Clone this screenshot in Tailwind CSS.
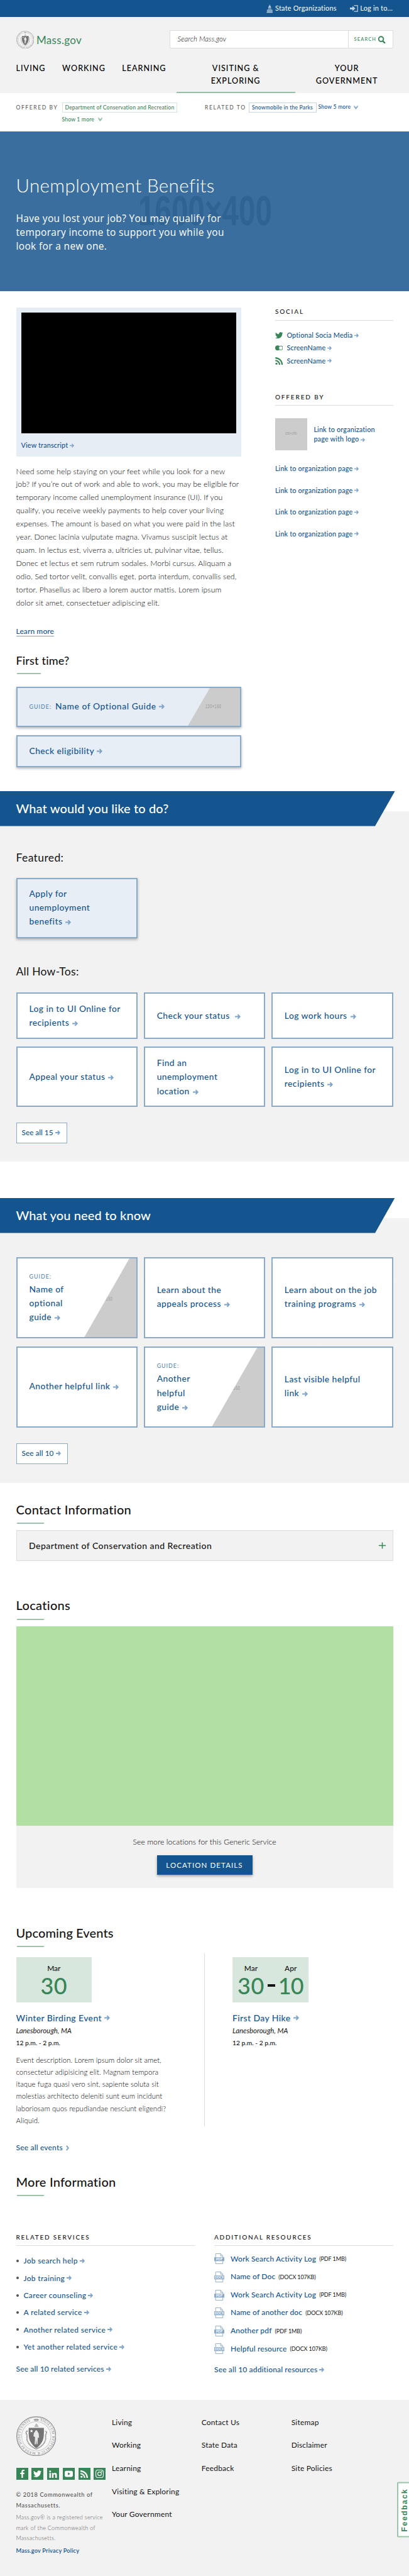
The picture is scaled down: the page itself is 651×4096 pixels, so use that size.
<!DOCTYPE html>
<html lang="en">
<head>
<meta charset="utf-8">
<title>Unemployment Benefits | Mass.gov</title>
<script src="https://cdn.jsdelivr.net/npm/@tailwindcss/browser@4"></script>
</head>
<body class="w-[651px] overflow-x-hidden bg-white text-[#141414] font-['Lato','Open_Sans',sans-serif] whitespace-nowrap">

<svg class="hidden">
  <symbol id="arrow" viewBox="0 0 10 10"><path d="M0 5h7M5 1.2 8.6 5 5 8.8" fill="none" stroke="currentColor" stroke-width="2.2"/></symbol>
  <symbol id="down" viewBox="0 0 10 10"><path d="M1.5 1.5 5 5.2l3.5-3.7v3L5 8.8 1.5 4.500z" fill="currentColor"/></symbol>
  <symbol id="right" viewBox="0 0 6 10"><path d="M1.2 1 4.300 5 1.200 9" fill="none" stroke="currentColor" stroke-width="2.2"/></symbol>
  <symbol id="twitter" viewBox="0 0 24 24"><path fill="currentColor" d="M23.954 4.569a10 10 0 0 1-2.825.775 4.958 4.958 0 0 0 2.163-2.723c-.951.555-2.005.959-3.127 1.184a4.920 4.920 0 0 0-8.384 4.482C7.691 8.094 4.066 6.130 1.640 3.161a4.822 4.822 0 0 0-.666 2.475c0 1.710.870 3.213 2.188 4.096a4.904 4.904 0 0 1-2.228-.616v.061a4.923 4.923 0 0 0 3.946 4.827 4.996 4.996 0 0 1-2.212.085 4.937 4.937 0 0 0 4.604 3.417 9.868 9.868 0 0 1-6.102 2.105c-.390 0-.779-.023-1.170-.067a13.995 13.995 0 0 0 7.557 2.209c9.054 0 13.999-7.496 13.999-13.986 0-.209 0-.420-.015-.630a9.936 9.936 0 0 0 2.460-2.548z"/></symbol>
  <symbol id="rss" viewBox="0 0 24 24"><circle cx="3.500" cy="20.500" r="3.200" fill="currentColor"/><path d="M0 10.500A13.500 13.500 0 0 1 13.500 24M0 2.300A21.700 21.700 0 0 1 21.700 24" fill="none" stroke="currentColor" stroke-width="4.400"/></symbol>
  <symbol id="flickr" viewBox="0 0 24 24"><circle cx="7.500" cy="12" r="7.500" fill="currentColor"/><circle cx="17" cy="12" r="6.200" fill="#fff" stroke="currentColor" stroke-width="1.800"/></symbol>
  <symbol id="seal" viewBox="0 0 100 100">
    <circle cx="50" cy="50" r="49" fill="#f7f7f7" stroke="#777" stroke-width="1.600"/>
    <circle cx="50" cy="50" r="46.500" fill="none" stroke="#999" stroke-width=".6"/>
    <circle cx="50" cy="50" r="36.500" fill="none" stroke="#aaa" stroke-width="1.600" stroke-dasharray="1 .6"/>
    <path id="ring" d="M59.500 11.200A40 40 0 1 1 40.500 11.200" fill="none"/>
    <text font-size="9" fill="#777" font-family="Liberation Serif, serif" textLength="226"><textPath href="#ring">SIGILLUM REIPUBLICÆ MASSACHUSETTENSIS</textPath></text>
    <path d="M43 9h14M46 7.500h8v3.400h-8z" fill="none" stroke="#777" stroke-width="1.200"/>
    <path d="M31 29h38c.500 15 0 27-4 34-4 8-10 14-15 17-5-3-11-9-15-17-4-7-4.500-19-4-34z" fill="#747474"/>
    <path d="M45 27c1-4 3-7 5-9 3 2 5 5 6 9z" fill="#bbb"/>
    <path d="M28 37c-5 1-4 6-2 8 2 4-1 11 2 17 3 8 10 15 22 20 12-5 19-12 22-20 3-6 0-13 2-17 2-2 3-7-2-8" fill="none" stroke="#888" stroke-width="3" stroke-dasharray="2.500 1"/>
    <path d="M47 38a3 3 0 0 1 6 0l3 5 1 11-3-1-1 17h-2l-1-12-1 12h-3l1-18-4-2 1-8z" fill="#e8e8e8"/>
    <path d="m38 33 1.200 2.600 2.800.2-2.200 1.800.8 2.800-2.600-1.600-2.500 1.600.8-2.800-2.100-1.800 2.700-.2z" fill="#fff"/>
  </symbol>
  <symbol id="doc" viewBox="0 0 16 17"><path d="M2.200.5h8l3.500 3.700v12.300H2.200zM10.200.5v3.700h3.500" fill="#fff" stroke="#89aac9" stroke-width=".9"/><path d="M0 6.200h16v6.100H0z" fill="#89aac9"/></symbol>
</svg>

<!-- utility bar -->
<div class="flex h-[27px] items-center justify-end bg-[#14558f] pr-[26px] text-[10.900px] font-normal tracking-[0.230px] text-white">
  <svg class="mr-[4px] h-[20px] w-[10.500px] text-[#c2d3e3]" viewBox="0 0 10 20" fill="currentColor"><path d="M4.700 0h.6v2.200h-.6zM3.500 3.800C3.700 2.500 4.300 2 5 2s1.300.500 1.500 1.800zM2.800 7.200c0-2 .8-3 2.200-3s2.200 1 2.200 3zM2.600 8h4.800v1H2.600zM2.800 9.500h.8v2.700h-.8zM4.600 9.500h.8v2.700h-.8zM6.400 9.500h.8v2.700h-.8zM.5 12.600h9v1.200h-9zM.8 14.300h1.100v3.700H.8zM2.800 14.300h1.100v3.700H2.800zM4.500 14.300h1v3.700h-1zM6.200 14.300h1.100v3.700H6.200zM8.100 14.300h1.100v3.700H8.100zM0 18.200h10v1.400H0z" transform="translate(0 3.300) scale(1 .66)"/></svg>
  <span>State Organizations</span>
  <svg class="ml-[21.500px] mr-[3px] h-[11px] w-[13px] text-[#c2d3e3]" viewBox="0 0 13 11" fill="currentColor"><path d="M0 4h4V1.500l4.600 4L4 9.500V7H0z"/><path d="M6.500.8h5.700v9.400H6.500" fill="none" stroke="currentColor" stroke-width="1.200"/></svg>
  <span>Log in to...</span>
</div>

<!-- header -->
<header class="h-[121px] bg-[#f2f2f2] px-[25.500px] pt-[21.300px]">
  <div class="flex h-[29.200px] items-center justify-between">
    <div class="flex items-center">
      <svg class="h-[28.500px] w-[28.500px]"><use href="#seal"/></svg>
      <span class="ml-[4px] pt-[2px] text-[17px] font-normal leading-[20px] tracking-[0.300px] text-[#388557]">Mass.gov</span>
    </div>
    <div class="flex h-full w-[356px] border border-[#dcdcdc] bg-white">
      <div class="flex flex-1 items-center pl-[12px] text-[11.300px] font-light italic tracking-[0.100px] text-black">Search Mass.gov</div>
      <div class="flex w-[71px] items-center border-l border-[#dcdcdc] pl-[9px] text-[7.400px] font-medium tracking-[1.200px] text-[#388557]">SEARCH
        <svg class="ml-[2px] h-[12.500px] w-[13px]" viewBox="0 0 13 13" fill="none" stroke="currentColor"><circle cx="5.500" cy="5.300" r="4" stroke-width="2"/><path d="m8.300 8.500 3.800 3.800" stroke-width="2.400"/></svg>
      </div>
    </div>
  </div>
  <nav class="mt-[22px] flex h-[48.500px] text-[12.600px] font-medium leading-[19.700px] tracking-[1px] text-black">
    <div class="w-[73.600px]">LIVING</div>
    <div class="w-[95.100px]">WORKING</div>
    <div class="w-[86.500px]">LEARNING</div>
    <div class="flex w-[189px] flex-col justify-between text-center"><span>VISITING &amp;<br>EXPLORING</span><i class="block h-[2px] -skew-x-[20deg] bg-[#93bfa4]"></i></div>
    <div class="flex-1 pl-[9px] text-center">YOUR<br>GOVERNMENT</div>
  </nav>
</header>

<!-- relationship strip -->
<div class="flex h-[61px] px-[25.500px] pt-[14.500px] text-[8.600px] font-medium tracking-[0.170px]">
  <div class="w-[73px] text-[8.500px] font-normal leading-[16px] tracking-[1.600px] text-[#535353]">OFFERED BY</div>
  <div class="w-[227.500px] text-[#388557]">
    <div class="h-[16px] w-[183px] border border-[#d4e5db] pl-[4px] leading-[14px]">Department of Conservation and Recreation</div>
    <div class="mt-[3px] flex items-center leading-[16px]">Show 1 more<svg class="ml-[5px] h-[9px] w-[9px] text-[#93bfa4]"><use href="#down"/></svg></div>
  </div>
  <div class="w-[70px] text-[8.500px] font-normal leading-[16px] tracking-[1.600px] text-[#535353]">RELATED TO</div>
  <div class="flex h-[16px] text-[#14558f]">
    <div class="w-[107.600px] border border-[#c8d7e6] pl-[4px] leading-[14px]">Snowmobile in the Parks</div>
    <div class="ml-[3px] flex items-center">Show 5 more<svg class="ml-[4px] h-[9px] w-[9px] text-[#89aac9]"><use href="#down"/></svg></div>
  </div>
</div>

<!-- hero -->
<section class="relative h-[254px] bg-[#3a6e9e] pl-[25.500px] pt-[67px] text-white">
  <div class="absolute left-[220px] top-[88px] origin-left scale-x-[0.710] text-[67px] font-bold leading-[76px] text-[#2f6394] font-['Liberation_Sans']">1600×400</div>
  <h1 class="relative text-[29.500px] font-light leading-[38px] tracking-[0.400px]">Unemployment Benefits</h1>
  <p class="relative mt-[21.500px] text-[15.500px] font-normal leading-[22.300px] tracking-[0.350px] font-['Open_Sans']">Have you lost your job? You may qualify for<br>temporary income to support you while you<br>look for a new one.</p>
</section>

<!-- overview + sidebar -->
<section class="flex h-[795px] px-[25.500px] pt-[25.500px]">
  <div class="w-[358.500px]">
    <div class="h-[237px] bg-[#e7edf5] px-[8px] pt-[8.500px]">
      <div class="h-[192px] bg-black"></div>
      <div class="mt-[12px] flex items-center text-[10.800px] font-medium leading-[14px] tracking-[0.170px] text-[#14558f]">View transcript<svg class="ml-[3px] h-[7px] w-[7px] text-[#7fa3c8]"><use href="#arrow"/></svg></div>
    </div>
    <p class="mt-[14px] text-[12.300px] font-light leading-[20.970px] tracking-[0.080px] text-black">Need some help staying on your feet while you look for a new<br>job? If you’re out of work and able to work, you may be eligible for<br>temporary income called unemployment insurance (UI). If you<br>qualify, you receive weekly payments to help cover your living<br>expenses. The amount is based on what you were paid in the last<br>year. Donec lacinia vulputate magna. Vivamus suscipit lectus at<br>quam. In lectus est, viverra a, ultricies ut, pulvinar vitae, tellus.<br>Donec et lectus et sem rutrum sodales. Morbi cursus. Aliquam a<br>odio. Sed tortor velit, convallis eget, porta interdum, convallis sed,<br>tortor. Phasellus ac libero a lorem auctor mattis. Lorem ipsum<br>dolor sit amet, consectetuer adipiscing elit.</p>
    <div class="mt-[19.500px] h-[17px]"><a class="inline-block h-[17px] border-b border-[#7fa3c8] text-[12px] font-medium leading-[17px] tracking-[0.100px] text-[#14558f]">Learn more</a></div>
    <h2 class="mt-[31px] text-[18px] font-medium leading-[24px] tracking-[0.170px]">First time?</h2>
    <div class="ml-[1px] mt-[8px] h-[2px] w-[38px] -skew-x-[20deg] bg-[#9bc4ab]"></div>
    <div class="relative mt-[20px] flex h-[64.200px] items-center border-2 border-[#89aac9] bg-[#e6edf4] pl-[19px] text-[13.800px] font-medium tracking-[0.600px] text-[#14558f] shadow-[0_2px_4px_rgba(0,0,0,0.300)]">
      <svg class="absolute right-0 top-0 h-full w-[83px]" viewBox="0 0 83 60" preserveAspectRatio="none"><path d="M35 0H83V60H0z" fill="#ccc"/></svg>
      <span class="absolute left-[299px] origin-left scale-x-[0.600] text-[9px] font-normal tracking-[1px] text-[#999] font-['Liberation_Sans']">130×160</span>
      <span class="mr-[6px] text-[8.800px] font-normal tracking-[1.030px] text-[#4a7bab]">GUIDE:</span>Name of Optional Guide<svg class="ml-[4px] h-[9px] w-[9px] text-[#7fa3c8]"><use href="#arrow"/></svg>
    </div>
    <div class="mt-[12.800px] flex h-[51.300px] items-center border-2 border-[#89aac9] bg-[#e8eef5] pl-[19px] text-[13.800px] font-medium tracking-[0.450px] text-[#14558f] shadow-[0_2px_4px_rgba(0,0,0,0.300)]">Check eligibility<svg class="ml-[4px] h-[9px] w-[9px] text-[#7fa3c8]"><use href="#arrow"/></svg></div>
  </div>

  <aside class="-mt-[0.500px] ml-[54px] w-[187.700px] text-[10.800px] font-medium leading-[14px] tracking-[0.170px] text-[#14558f]">
    <h3 class="border-b-[1.500px] border-[#dcdcdc] pb-[7px] text-[10px] leading-[14px] tracking-[1.870px] text-[#141414]">SOCIAL</h3>
    <div class="mt-[16px] flex h-[14px] items-center"><svg class="mr-[6px] h-[12.500px] w-[12.500px] text-[#388557]"><use href="#twitter"/></svg>Optional Socia Media<svg class="ml-[3px] h-[7px] w-[7px] text-[#7fa3c8]"><use href="#arrow"/></svg></div>
    <div class="mt-[6.300px] flex h-[14px] items-center"><svg class="mr-[6px] h-[12.500px] w-[12.500px] text-[#388557]"><use href="#flickr"/></svg>ScreenName<svg class="ml-[3px] h-[7px] w-[7px] text-[#7fa3c8]"><use href="#arrow"/></svg></div>
    <div class="mt-[6.300px] flex h-[14px] items-center"><svg class="mr-[6px] h-[12px] w-[12.500px] text-[#388557]"><use href="#rss"/></svg>ScreenName<svg class="ml-[3px] h-[7px] w-[7px] text-[#7fa3c8]"><use href="#arrow"/></svg></div>
    <h3 class="mt-[43.600px] border-b-[1.500px] border-[#dcdcdc] pb-[6px] text-[10px] leading-[14px] tracking-[1.870px] text-[#141414]">OFFERED BY</h3>
    <div class="mt-[19.500px] flex h-[51px] items-center">
      <div class="mr-[10.500px] flex h-[51px] w-[51px] items-center justify-center bg-[#ccc] text-[4.500px] font-normal text-[#999] font-['Liberation_Sans']">250×250</div>
      <div class="leading-[15.200px]">Link to organization<br>page with logo<svg class="ml-[3px] inline h-[7px] w-[7px] text-[#7fa3c8]"><use href="#arrow"/></svg></div>
    </div>
    <div class="mt-[22.700px] flex h-[14px] items-center">Link to organization page<svg class="ml-[3px] h-[7px] w-[7px] text-[#7fa3c8]"><use href="#arrow"/></svg></div>
    <div class="mt-[20.400px] flex h-[14px] items-center">Link to organization page<svg class="ml-[3px] h-[7px] w-[7px] text-[#7fa3c8]"><use href="#arrow"/></svg></div>
    <div class="mt-[20.400px] flex h-[14px] items-center">Link to organization page<svg class="ml-[3px] h-[7px] w-[7px] text-[#7fa3c8]"><use href="#arrow"/></svg></div>
    <div class="mt-[20.400px] flex h-[14px] items-center">Link to organization page<svg class="ml-[3px] h-[7px] w-[7px] text-[#7fa3c8]"><use href="#arrow"/></svg></div>
  </aside>
</section>

<!-- what would you like to do -->
<section class="h-[589.400px] bg-linear-to-b from-white from-[32px] to-[#f2f2f2] to-[32px]">
  <h2 class="flex h-[55.500px] w-[628.600px] items-center bg-[#14558f] pb-[1px] pl-[25.500px] text-[20px] font-medium tracking-[0.120px] text-white [clip-path:polygon(0_0,100%_0,597px_100%,0_100%)]">What would you like to do?</h2>
  <div class="px-[25.500px] text-[13.800px] font-medium leading-[22.200px] tracking-[0.450px] text-[#14558f]">
    <h3 class="mt-[38.500px] text-[17.500px] font-normal leading-[24px] tracking-[0.380px] text-[#141414]">Featured:</h3>
    <div class="mt-[20.400px] flex h-[96px] w-[193.700px] items-center border-2 border-[#89aac9] bg-[#e8eef5] pb-[3px] pl-[19px] shadow-[0_2px_4px_rgba(0,0,0,0.300)]"><span>Apply for<br>unemployment<br>benefits<svg class="ml-[5px] inline h-[9px] w-[9px] text-[#7fa3c8]"><use href="#arrow"/></svg></span></div>
    <h3 class="mt-[41px] text-[17.500px] font-normal leading-[24px] tracking-[0.280px] text-[#141414]">All How-Tos:</h3>
    <div class="mt-[20.600px] grid grid-cols-3 grid-rows-[73.800px_96px] gap-x-[9.500px] gap-y-[12.700px]">
      <div class="flex items-center border-2 border-[#89aac9] bg-white pl-[19px]"><span>Log in to UI Online for<br>recipients<svg class="ml-[5px] inline h-[9px] w-[9px] text-[#7fa3c8]"><use href="#arrow"/></svg></span></div>
      <div class="flex items-center border-2 border-[#89aac9] bg-white pl-[19px]"><span>Check your status<svg class="ml-[8px] inline h-[9px] w-[9px] text-[#7fa3c8]"><use href="#arrow"/></svg></span></div>
      <div class="flex items-center border-2 border-[#89aac9] bg-white pl-[19px]"><span>Log work hours<svg class="ml-[5px] inline h-[9px] w-[9px] text-[#7fa3c8]"><use href="#arrow"/></svg></span></div>
      <div class="flex items-center border-2 border-[#89aac9] bg-white pl-[19px]"><span>Appeal your status<svg class="ml-[5px] inline h-[9px] w-[9px] text-[#7fa3c8]"><use href="#arrow"/></svg></span></div>
      <div class="flex items-center border-2 border-[#89aac9] bg-white pl-[19px]"><span>Find an<br>unemployment<br>location<svg class="ml-[5px] inline h-[9px] w-[9px] text-[#7fa3c8]"><use href="#arrow"/></svg></span></div>
      <div class="flex items-center border-2 border-[#89aac9] bg-white pl-[19px]"><span>Log in to UI Online for<br>recipients<svg class="ml-[5px] inline h-[9px] w-[9px] text-[#7fa3c8]"><use href="#arrow"/></svg></span></div>
    </div>
    <div class="mt-[24.700px] flex h-[32.500px] w-[81px] items-center border border-[#89aac9] bg-white pl-[8px] text-[11.800px] tracking-normal">See all 15<svg class="ml-[3px] h-[8px] w-[8px] text-[#7fa3c8]"><use href="#arrow"/></svg></div>
  </div>
</section>

<!-- what you need to know -->
<section class="mt-[57.200px] h-[453px] bg-linear-to-b from-white from-[32px] to-[#f2f2f2] to-[32px]">
  <h2 class="flex h-[56px] w-[628.600px] items-center bg-[#14558f] pb-[1px] pl-[25.500px] text-[20px] font-medium tracking-[0.120px] text-white [clip-path:polygon(0_0,100%_0,597px_100%,0_100%)]">What you need to know</h2>
  <div class="px-[25.500px] pt-[38px] text-[13.800px] font-medium leading-[22.200px] tracking-[0.450px] text-[#14558f]">
    <div class="grid grid-cols-3 grid-rows-[129.600px_129.600px] gap-x-[9.500px] gap-y-[12.700px]">
      <div class="relative flex items-center overflow-hidden border-2 border-[#89aac9] bg-white pb-[1px] pl-[19px]">
        <div class="absolute right-0 top-0 h-full w-[83px] bg-[#ccc] [clip-path:polygon(72px_0,100%_0,100%_100%,0_100%)]"><span class="absolute left-[20px] top-[53px] block origin-left scale-x-[0.600] text-[9px] font-normal leading-[22px] tracking-[1px] text-[#999] font-['Liberation_Sans']">130×160</span></div>
        <span class="relative"><span class="block text-[8.800px] font-normal leading-[19px] tracking-[1.030px] text-[#4a7bab]">GUIDE:</span>Name of<br>optional<br>guide<svg class="ml-[5px] inline h-[9px] w-[9px] text-[#7fa3c8]"><use href="#arrow"/></svg></span>
      </div>
      <div class="flex items-center border-2 border-[#89aac9] bg-white pb-[3px] pl-[19px]"><span>Learn about the<br>appeals process<svg class="ml-[5px] inline h-[9px] w-[9px] text-[#7fa3c8]"><use href="#arrow"/></svg></span></div>
      <div class="flex items-center border-2 border-[#89aac9] bg-white pb-[3px] pl-[19px]"><span>Learn about on the job<br>training programs<svg class="ml-[5px] inline h-[9px] w-[9px] text-[#7fa3c8]"><use href="#arrow"/></svg></span></div>
      <div class="flex items-center border-2 border-[#89aac9] bg-white pb-[3px] pl-[19px]"><span>Another helpful link<svg class="ml-[5px] inline h-[9px] w-[9px] text-[#7fa3c8]"><use href="#arrow"/></svg></span></div>
      <div class="relative flex items-center overflow-hidden border-2 border-[#89aac9] bg-white pb-[1px] pl-[19px]">
        <div class="absolute right-0 top-0 h-full w-[83px] bg-[#ccc] [clip-path:polygon(72px_0,100%_0,100%_100%,0_100%)]"><span class="absolute left-[20px] top-[53px] block origin-left scale-x-[0.600] text-[9px] font-normal leading-[22px] tracking-[1px] text-[#999] font-['Liberation_Sans']">130×160</span></div>
        <span class="relative"><span class="block text-[8.800px] font-normal leading-[19px] tracking-[1.030px] text-[#4a7bab]">GUIDE:</span>Another<br>helpful<br>guide<svg class="ml-[5px] inline h-[9px] w-[9px] text-[#7fa3c8]"><use href="#arrow"/></svg></span>
      </div>
      <div class="flex items-center border-2 border-[#89aac9] bg-white pb-[3px] pl-[19px]"><span>Last visible helpful<br>link<svg class="ml-[5px] inline h-[9px] w-[9px] text-[#7fa3c8]"><use href="#arrow"/></svg></span></div>
    </div>
    <div class="mt-[24.700px] flex h-[32.500px] w-[82.500px] items-center border border-[#89aac9] bg-white pl-[8px] text-[11.800px] tracking-[0.100px]">See all 10<svg class="ml-[3px] h-[8px] w-[8px] text-[#7fa3c8]"><use href="#arrow"/></svg></div>
  </div>
</section>

<main class="h-[1458.600px] px-[25.500px]">
  <!-- contact -->
  <h2 class="pt-[29px] text-[20px] font-medium leading-[26px] tracking-[0.310px]">Contact Information</h2>
  <div class="ml-[1.500px] mt-[8.500px] h-[2px] w-[43px] -skew-x-[20deg] bg-[#9bc4ab]"></div>
  <div class="mt-[10px] flex h-[49px] items-center justify-between border-[1.500px] border-[#dcdcdc] bg-[#f2f2f2] pl-[19.500px] pr-[11px] text-[14px] font-medium tracking-[0.470px]">Department of Conservation and Recreation
    <svg class="h-[11px] w-[11px]" viewBox="0 0 11 11" stroke="#388557" stroke-width="1.500"><path d="M0 5.500h11M5.500.500v10"/></svg>
  </div>

  <!-- locations -->
  <h2 class="mt-[57.300px] text-[20px] font-medium leading-[26px] tracking-[0.310px]">Locations</h2>
  <div class="ml-[1.500px] mt-[8.500px] h-[2px] w-[43px] -skew-x-[20deg] bg-[#9bc4ab]"></div>
  <div class="mt-[10px] h-[317.600px] bg-[#b2dfa2]"></div>
  <div class="flex h-[98.500px] flex-col items-center bg-[#f2f2f2] pt-[16px]">
    <p class="text-[12.200px] font-light leading-[20px] tracking-[0.070px] text-black">See more locations for this Generic Service</p>
    <div class="mt-[10.300px] flex h-[31.700px] w-[152px] items-center justify-center bg-[#14558f] text-[11.500px] font-normal tracking-[1.100px] text-white shadow-[0_2px_4px_rgba(0,0,0,0.350)]">LOCATION DETAILS</div>
  </div>

  <!-- events -->
  <h2 class="mt-[57.800px] text-[20px] font-medium leading-[26px] tracking-[0.120px]">Upcoming Events</h2>
  <div class="ml-[1.500px] mt-[8.500px] h-[2px] w-[43px] -skew-x-[20deg] bg-[#9bc4ab]"></div>
  <div class="mt-[10px] flex h-[274.400px] pt-[6px]">
    <div class="w-[344.500px]">
      <div class="flex h-[72px] w-[120.600px] flex-col items-center bg-[#d8e7dd] pt-[10px] font-medium"><span class="text-[11.900px] leading-[16px]">Mar</span><span class="text-[36px] leading-[38px] tracking-[0.500px] text-[#388557]">30</span></div>
      <h3 class="mt-[16px] flex h-[16px] items-center text-[14px] font-medium tracking-[0.390px] text-[#14558f]">Winter Birding Event<svg class="ml-[4px] h-[9px] w-[9px] text-[#7fa3c8]"><use href="#arrow"/></svg></h3>
      <div class="mt-[5px] text-[11.400px] font-normal italic leading-[15px]">Lanesborough, MA</div>
      <div class="mt-[5px] text-[10.300px] font-medium leading-[15px]">12 p.m. - 2 p.m.</div>
      <p class="mt-[10px] text-[11.400px] font-light leading-[19.060px] tracking-[0.110px] text-black">Event description. Lorem ipsum dolor sit amet,<br>consectetur adipisicing elit. Magnam tempora<br>itaque fuga quasi vero sint, sapiente soluta sit<br>molestias architecto deleniti sunt eum incidunt<br>laboriosam quos repudiandae nesciunt eligendi?<br>Aliquid.</p>
    </div>
    <div class="-ml-[45px] -mt-[6px] w-px bg-[#dcdcdc]"></div>
    <div class="ml-[44px]">
      <div class="flex h-[72px] w-[120.600px] items-start justify-center bg-[#d8e7dd] pt-[10px] font-medium">
        <span class="flex flex-col items-center"><span class="text-[11.900px] leading-[16px]">Mar</span><span class="text-[36px] leading-[38px] tracking-[0.500px] text-[#388557]">30</span></span>
        <i class="mx-[5px] mt-[33px] block h-[4px] w-[12px] bg-[#141414]"></i>
        <span class="flex flex-col items-center"><span class="text-[11.900px] leading-[16px]">Apr</span><span class="text-[36px] leading-[38px] -tracking-[1px] text-[#388557]">10</span></span>
      </div>
      <h3 class="mt-[16px] flex h-[16px] items-center text-[14px] font-medium tracking-[0.390px] text-[#14558f]">First Day Hike<svg class="ml-[4px] h-[9px] w-[9px] text-[#7fa3c8]"><use href="#arrow"/></svg></h3>
      <div class="mt-[5px] text-[11.400px] font-normal italic leading-[15px]">Lanesborough, MA</div>
      <div class="mt-[5px] text-[10.300px] font-medium leading-[15px]">12 p.m. - 2 p.m.</div>
    </div>
  </div>
  <div class="mt-[26.500px] flex h-[16px] items-center text-[12px] font-medium tracking-[0.180px] text-[#14558f]">See all events<svg class="ml-[4px] h-[9px] w-[7px] text-[#7fa3c8]"><use href="#right"/></svg></div>

  <!-- more information -->
  <h2 class="mt-[32.500px] text-[20px] font-medium leading-[26px] tracking-[0.220px]">More Information</h2>
  <div class="ml-[1.500px] mt-[8.500px] h-[2px] w-[43px] -skew-x-[20deg] bg-[#9bc4ab]"></div>
  <div class="mt-[57.500px] flex gap-[31px] text-[12px] font-medium text-[#14558f]">
    <div class="w-[284.700px] tracking-[0.330px]">
      <h3 class="border-b-[1.500px] border-[#dcdcdc] pb-[6.500px] text-[10px] leading-[14px] tracking-[1.750px] text-[#141414]">RELATED SERVICES</h3>
      <ul class="mt-[10.300px] leading-[27.300px]">
        <li class="flex items-center"><i class="mr-[8px] h-[4px] w-[4px] rounded-full bg-[#535353]"></i>Job search help<svg class="ml-[3px] h-[8px] w-[8px] text-[#7fa3c8]"><use href="#arrow"/></svg></li>
        <li class="flex items-center"><i class="mr-[8px] h-[4px] w-[4px] rounded-full bg-[#535353]"></i>Job training<svg class="ml-[3px] h-[8px] w-[8px] text-[#7fa3c8]"><use href="#arrow"/></svg></li>
        <li class="flex items-center"><i class="mr-[8px] h-[4px] w-[4px] rounded-full bg-[#535353]"></i>Career counseling<svg class="ml-[3px] h-[8px] w-[8px] text-[#7fa3c8]"><use href="#arrow"/></svg></li>
        <li class="flex items-center"><i class="mr-[8px] h-[4px] w-[4px] rounded-full bg-[#535353]"></i>A related service<svg class="ml-[3px] h-[8px] w-[8px] text-[#7fa3c8]"><use href="#arrow"/></svg></li>
        <li class="flex items-center"><i class="mr-[8px] h-[4px] w-[4px] rounded-full bg-[#535353]"></i>Another related service<svg class="ml-[3px] h-[8px] w-[8px] text-[#7fa3c8]"><use href="#arrow"/></svg></li>
        <li class="flex items-center"><i class="mr-[8px] h-[4px] w-[4px] rounded-full bg-[#535353]"></i>Yet another related service<svg class="ml-[3px] h-[8px] w-[8px] text-[#7fa3c8]"><use href="#arrow"/></svg></li>
      </ul>
      <div class="mt-[14px] flex h-[16px] items-center tracking-[0.150px]">See all 10 related services<svg class="ml-[3px] h-[8px] w-[8px] text-[#7fa3c8]"><use href="#arrow"/></svg></div>
    </div>
    <div class="w-[284.700px] tracking-[0.150px]">
      <h3 class="border-b-[1.500px] border-[#dcdcdc] pb-[6.500px] text-[10px] leading-[14px] tracking-[1.750px] text-[#141414]">ADDITIONAL RESOURCES</h3>
      <ul class="mt-[6.500px] leading-[28.600px]">
        <li class="flex h-[28.600px] items-center"><span class="relative mr-[10px] block h-[17px] w-[16px]"><svg class="h-full w-full"><use href="#doc"/></svg><b class="absolute inset-x-0 top-[6px] text-center text-[5.500px] leading-[7px] tracking-normal text-white">PDF</b></span>Work Search Activity Log<span class="ml-[5px] pt-[1px] text-[9px] font-normal -tracking-[0.100px] text-[#141414]">(PDF 1MB)</span></li>
        <li class="flex h-[28.600px] items-center"><span class="relative mr-[10px] block h-[17px] w-[16px]"><svg class="h-full w-full"><use href="#doc"/></svg><b class="absolute inset-x-0 top-[6px] text-center text-[5px] leading-[7px] tracking-normal text-white">DOCX</b></span>Name of Doc<span class="ml-[5px] pt-[1px] text-[9px] font-normal -tracking-[0.100px] text-[#141414]">(DOCX 107KB)</span></li>
        <li class="flex h-[28.600px] items-center"><span class="relative mr-[10px] block h-[17px] w-[16px]"><svg class="h-full w-full"><use href="#doc"/></svg><b class="absolute inset-x-0 top-[6px] text-center text-[5.500px] leading-[7px] tracking-normal text-white">PDF</b></span>Work Search Activity Log<span class="ml-[5px] pt-[1px] text-[9px] font-normal -tracking-[0.100px] text-[#141414]">(PDF 1MB)</span></li>
        <li class="flex h-[28.600px] items-center"><span class="relative mr-[10px] block h-[17px] w-[16px]"><svg class="h-full w-full"><use href="#doc"/></svg><b class="absolute inset-x-0 top-[6px] text-center text-[5px] leading-[7px] tracking-normal text-white">DOCX</b></span>Name of another doc<span class="ml-[5px] pt-[1px] text-[9px] font-normal -tracking-[0.100px] text-[#141414]">(DOCX 107KB)</span></li>
        <li class="flex h-[28.600px] items-center"><span class="relative mr-[10px] block h-[17px] w-[16px]"><svg class="h-full w-full"><use href="#doc"/></svg><b class="absolute inset-x-0 top-[6px] text-center text-[5.500px] leading-[7px] tracking-normal text-white">PDF</b></span>Another pdf<span class="ml-[5px] pt-[1px] text-[9px] font-normal -tracking-[0.100px] text-[#141414]">(PDF 1MB)</span></li>
        <li class="flex h-[28.600px] items-center"><span class="relative mr-[10px] block h-[17px] w-[16px]"><svg class="h-full w-full"><use href="#doc"/></svg><b class="absolute inset-x-0 top-[6px] text-center text-[5px] leading-[7px] tracking-normal text-white">DOCX</b></span>Helpful resource<span class="ml-[5px] pt-[1px] text-[9px] font-normal -tracking-[0.100px] text-[#141414]">(DOCX 107KB)</span></li>
      </ul>
      <div class="mt-[11px] flex h-[16px] items-center">See all 10 additional resources<svg class="ml-[3px] h-[8px] w-[8px] text-[#7fa3c8]"><use href="#arrow"/></svg></div>
    </div>
  </div>
</main>

<footer class="relative flex h-[279.800px] overflow-hidden bg-[#f2f2f2] pl-[25.500px] pt-[25.500px]">
  <div class="w-[152.500px]">
    <svg class="h-[63.500px] w-[63.500px]"><use href="#seal"/></svg>
    <div class="mt-[19.200px] flex gap-[5.800px] text-white">
      <span class="flex h-[19px] w-[19px] items-center justify-center bg-[#388557]"><svg class="h-[13px] w-[13px]" viewBox="0 0 24 24" fill="currentColor"><path d="M14 24V13h3.700l.6-4.300H14V6c0-1.200.4-2.100 2.200-2.100h2.300V.2C18 .1 16.700 0 15.100 0 11.800 0 9.600 2 9.600 5.600v3.100H6V13h3.600v11z"/></svg></span>
      <span class="flex h-[19px] w-[19px] items-center justify-center bg-[#388557]"><svg class="h-[13px] w-[13px]"><use href="#twitter"/></svg></span>
      <span class="flex h-[19px] w-[19px] items-center justify-center bg-[#388557]"><svg class="h-[12.500px] w-[12.500px]" viewBox="0 0 24 24" fill="currentColor"><circle cx="3.500" cy="3.500" r="2.800"/><path d="M1 8h5v15H1zM9 8h4.700v2.100c.7-1.200 2.300-2.500 4.700-2.500 4.900 0 5.600 3.200 5.600 7.400V23h-5v-7.100c0-1.800 0-4-2.400-4s-2.700 1.900-2.700 3.800V23H9z"/></svg></span>
      <span class="flex h-[19px] w-[19px] items-center justify-center bg-[#388557]"><svg class="h-[13px] w-[13px]" viewBox="0 0 24 24"><rect x="0" y="3" width="24" height="18" rx="5" fill="#fff"/><path d="m9.500 8 7 4-7 4z" fill="#388557"/></svg></span>
      <span class="flex h-[19px] w-[19px] items-center justify-center bg-[#388557]"><svg class="h-[12px] w-[12px]"><use href="#rss"/></svg></span>
      <span class="flex h-[19px] w-[19px] items-center justify-center bg-[#388557]"><svg class="h-[13px] w-[13px]" viewBox="0 0 24 24" fill="none" stroke="#fff" stroke-width="2"><rect x="1" y="1" width="22" height="22" rx="6"/><circle cx="12" cy="12" r="5.300"/><circle cx="18.300" cy="5.700" r=".7"/></svg></span>
    </div>
    <p class="mt-[16px] text-[9.200px] font-medium leading-[16.500px] tracking-[0.620px] text-[#535353]">© 2018 Commonwealth of<br>Massachusetts.</p>
    <p class="mt-[3px] text-[9px] font-light leading-[16.500px] tracking-[0.280px] text-[#606060]">Mass.gov® is a registered service<br>mark of the Commonwealth of<br>Massachusetts.</p>
    <p class="mt-[3.500px] text-[9.200px] font-semibold leading-[16.500px] tracking-[0.200px] text-[#14558f]">Mass.gov Privacy Policy</p>
  </div>
  <div class="-mt-[8px] w-[142.700px] text-[12px] font-normal leading-[36.700px] tracking-[0.200px]">Living<br>Working<br>Learning<br>Visiting &amp; Exploring<br>Your Government</div>
  <div class="-mt-[8px] w-[143px] text-[12px] font-normal leading-[36.700px] tracking-[0.200px]">Contact Us<br>State Data<br>Feedback</div>
  <div class="-mt-[8px] text-[12px] font-normal leading-[36.700px] tracking-[0.200px]">Sitemap<br>Disclaimer<br>Site Policies</div>
  <div class="absolute left-[632px] top-[131px] flex h-[87.500px] w-[24px] rotate-180 items-center justify-center rounded-[2px] border-2 border-[#9bc4ab] bg-white pl-[1px] text-[12px] font-bold tracking-[1.700px] text-[#388557] [writing-mode:vertical-rl] font-['Liberation_Sans']">Feedback</div>
</footer>
</body>
</html>
